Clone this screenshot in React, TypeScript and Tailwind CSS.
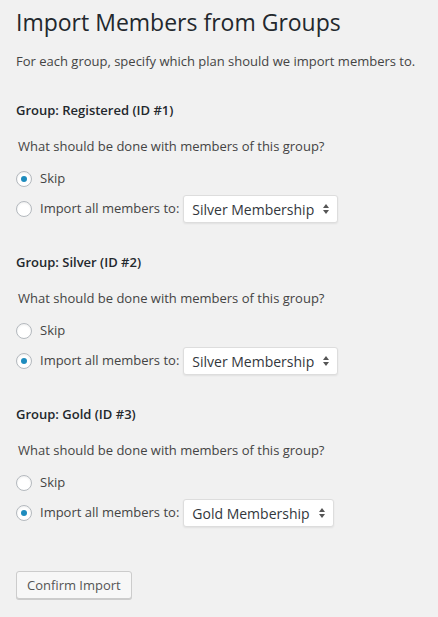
import React from "react";

type Group = {
  name: string;
  id: number;
  choice: "skip" | "import";
  plan: string;
};

const groups: Group[] = [
  { name: "Registered", id: 1, choice: "skip", plan: "Silver Membership" },
  { name: "Silver", id: 2, choice: "import", plan: "Silver Membership" },
  { name: "Gold", id: 3, choice: "import", plan: "Gold Membership" },
];

function Radio({ checked }: { checked: boolean }) {
  return (
    <span className="flex h-4 w-4 shrink-0 items-center justify-center rounded-full border border-[#b4b9be] bg-white shadow-[inset_0_1px_2px_rgba(0,0,0,0.07)]">
      {checked && <span className="h-[6px] w-[6px] rounded-full bg-[#1e8cbe]" />}
    </span>
  );
}

function Select({ value }: { value: string }) {
  return (
    <div className="flex h-7 items-center rounded-[3px] border border-[#ddd] bg-white pl-2 pr-2 text-[14px] text-[#32373c] shadow-[0_1px_2px_rgba(0,0,0,0.07)]">
      <span>{value}</span>
      <svg className="ml-[9px]" width="6" height="10" viewBox="0 0 6 10">
        <path d="M3 0 L6 4 L0 4 Z" fill="#555" />
        <path d="M3 10 L6 6 L0 6 Z" fill="#555" />
      </svg>
    </div>
  );
}

export default function App() {
  return (
    <div
      className="min-h-screen bg-[#f1f1f1] px-4 text-[13px] text-[#444]"
      style={{ fontFamily: '"Open Sans", "Liberation Sans", sans-serif' }}
    >
      <h1 className="pt-[7px] text-[23px] leading-[30px] font-normal text-[#23282d]">
        Import Members from Groups
      </h1>
      <p className="mt-[14px] leading-5">
        For each group, specify which plan should we import members to.
      </p>

      {groups.map((g) => (
        <div key={g.id} className="mt-[29px]">
          <h3 className="leading-5 font-semibold text-[#23282d]">
            Group: {g.name} (ID #{g.id})
          </h3>
          <p className="mt-4 pl-[2px] leading-5">
            What should be done with members of this group?
          </p>
          <label className="mt-[11px] flex h-6 items-center gap-2">
            <Radio checked={g.choice === "skip"} />
            <span>Skip</span>
          </label>
          <label className="mt-1 flex h-7 items-center gap-2">
            <Radio checked={g.choice === "import"} />
            <span className="flex items-center gap-1">
              <span>Import all members to:</span>
              <Select value={g.plan} />
            </span>
          </label>
        </div>
      ))}

      <button className="mt-[44px] h-7 rounded-[3px] border border-[#ccc] bg-[#f7f7f7] px-[10px] text-[13px] leading-[26px] text-[#555] shadow-[0_1px_0_#ccc]">
        Confirm Import
      </button>
    </div>
  );
}
